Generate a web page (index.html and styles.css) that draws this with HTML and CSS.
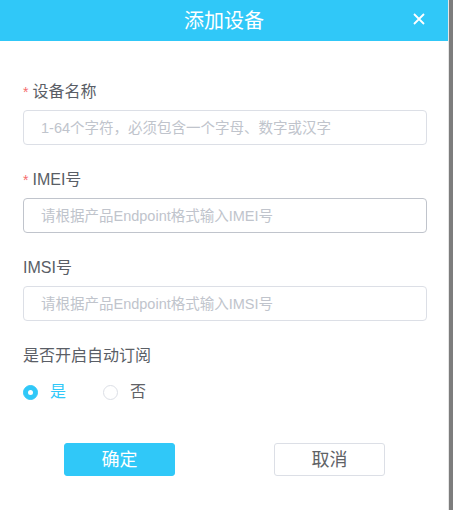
FILE: index.html
```html
<!DOCTYPE html>
<html lang="zh-CN">
<head>
<meta charset="utf-8">
<title>添加设备</title>
<link rel="stylesheet" href="styles.css">
</head>
<body>
<div class="screen">
  <div class="dialog">
    <div class="dialog-header">
      <span class="dialog-title">添加设备</span>
      <span class="dialog-close" aria-label="关闭">
        <svg width="12" height="12" viewBox="0 0 12 12"><path d="M1 1 L11 11 M11 1 L1 11" stroke="#fff" stroke-width="1.8" fill="none"/></svg>
      </span>
    </div>
    <div class="dialog-body">
      <div class="field">
        <label class="field-label"><span class="req">*</span>设备名称</label>
        <div class="input"><span class="placeholder">1-64个字符，必须包含一个字母、数字或汉字</span></div>
      </div>
      <div class="field">
        <label class="field-label"><span class="req">*</span>IMEI号</label>
        <div class="input input-focus"><span class="placeholder">请根据产品Endpoint格式输入IMEI号</span></div>
      </div>
      <div class="field">
        <label class="field-label">IMSI号</label>
        <div class="input"><span class="placeholder">请根据产品Endpoint格式输入IMSI号</span></div>
      </div>
      <div class="field field-radio">
        <label class="field-label">是否开启自动订阅</label>
        <div class="radio-group">
          <span class="radio radio-checked"><span class="radio-dot"></span><span class="radio-text">是</span></span>
          <span class="radio"><span class="radio-dot"></span><span class="radio-text">否</span></span>
        </div>
      </div>
    </div>
    <div class="dialog-footer">
      <button class="btn btn-primary">确定</button>
      <button class="btn btn-default">取消</button>
    </div>
  </div>
  <div class="backdrop"></div>
</div>
</body>
</html>
```
FILE: styles.css
```css
* { box-sizing: border-box; }
html, body { margin: 0; padding: 0; }
body {
  font-family: "Liberation Sans", "Noto Sans CJK SC", sans-serif;
  background: #fff;
  width: 453px;
  height: 510px;
  overflow: hidden;
}
.screen {
  display: flex;
  width: 453px;
  height: 510px;
}
.dialog {
  width: 448px;
  height: 510px;
  background: #fff;
  display: flex;
  flex-direction: column;
}
.backdrop {
  flex: 1;
  background: #7d7d7d;
  border-left: 1px solid #e6e6e6;
}
.dialog-header {
  height: 41px;
  background: #30c8f8;
  display: flex;
  align-items: center;
  justify-content: center;
  position: relative;
}
.dialog-title {
  color: #fff;
  font-size: 20px;
  line-height: 24px;
}
.dialog-close {
  position: absolute;
  right: 23px;
  top: 13px;
  width: 12px;
  height: 12px;
  display: flex;
}
.dialog-body {
  padding: 41px 21px 0 23px;
  display: flex;
  flex-direction: column;
  gap: 25px;
}
.field {
  display: flex;
  flex-direction: column;
  gap: 8px;
}
.field-label {
  font-size: 16px;
  line-height: 20px;
  height: 20px;
  color: #5a5e66;
  display: flex;
  align-items: center;
}
.req {
  color: #f56c6c;
  font-size: 14px;
  margin-right: 4px;
  line-height: 14px;
  align-self: flex-start;
  margin-top: 3px;
}
.input {
  height: 35px;
  border: 1px solid #dcdfe6;
  border-radius: 4px;
  display: flex;
  align-items: center;
  padding-left: 17px;
}
.input-focus { border-color: #c0c4cc; }
.placeholder {
  font-size: 14.5px;
  line-height: 18px;
  color: #c0c4cc;
  white-space: nowrap;
}
.field-radio { gap: 16px; }
.radio-group {
  display: flex;
  align-items: center;
  height: 20px;
}
.radio {
  display: flex;
  align-items: center;
  width: 80px;
}
.radio-dot {
  width: 15px;
  height: 15px;
  border-radius: 50%;
  border: 1px solid #dcdfe6;
  background: #fff;
  position: relative;
}
.radio-checked .radio-dot {
  background: #30c8f8;
  border-color: #30c8f8;
}
.radio-checked .radio-dot::after {
  content: "";
  position: absolute;
  left: 4px;
  top: 4px;
  width: 5px;
  height: 5px;
  border-radius: 50%;
  background: #fff;
}
.radio-text {
  margin-left: 12px;
  font-size: 16px;
  line-height: 20px;
  color: #606266;
}
.radio-checked .radio-text { color: #30c8f8; }
.dialog-footer {
  display: flex;
  padding: 41px 0 0 64px;
  gap: 99px;
}
.btn {
  width: 111px;
  height: 33px;
  border-radius: 3px;
  font-family: "Liberation Sans", "Noto Sans CJK SC", sans-serif;
  font-size: 18px;
  line-height: 22px;
  padding: 0;
  cursor: pointer;
}
.btn-primary {
  background: #30c8f8;
  color: #fff;
  border: 1px solid #30c8f8;
}
.btn-default {
  background: #fff;
  color: #606266;
  border: 1px solid #dcdfe6;
}
```
